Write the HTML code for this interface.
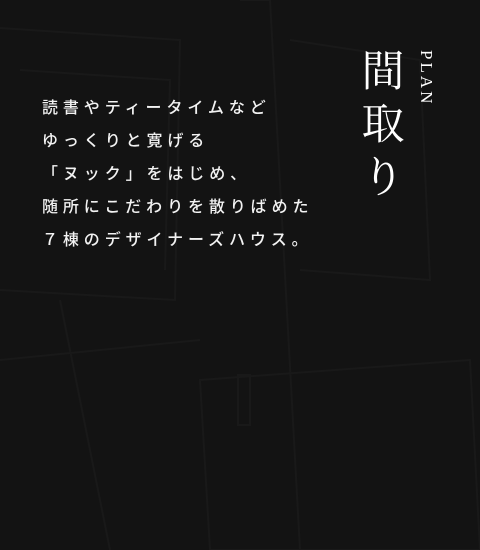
<!DOCTYPE html>
<html><head><meta charset="utf-8"><style>
body{margin:0;width:480px;height:550px;background:#131313;overflow:hidden;position:relative;font-family:"Liberation Sans","Noto Sans CJK JP",sans-serif}
.bg{position:absolute;left:0;top:0}
.t{position:absolute;left:42px;top:92px;color:#f2f2f2;font-size:16px;font-weight:500;letter-spacing:4.9px;line-height:33px;white-space:nowrap}
.h{position:absolute;left:358px;top:42px;color:#fff;font-family:"Noto Serif CJK SC","Noto Sans CJK JP",serif;font-size:43px;line-height:53px;width:50px;text-align:center}
.p{position:absolute;left:416px;top:50px;color:#fff;font-family:"Liberation Serif",serif;font-size:17px;letter-spacing:3px;transform-origin:0 0;transform:rotate(90deg) translate(0,-20px);white-space:nowrap}
</style></head><body>
<svg class="bg" width="480" height="550" fill="none" stroke="#191919" stroke-width="2">
<path d="M0 28 L180 40 L175 300 L0 290"/>
<path d="M20 70 L170 80 L165 270"/>
<path d="M240 0 L270 0 L300 550"/>
<path d="M290 40 L420 60 L430 280 L300 270"/>
<path d="M200 380 L470 360 L480 550 L210 550 Z"/>
<path d="M60 300 L110 550"/>
<path d="M0 360 L200 340"/>
<rect x="238" y="375" width="12" height="50"/>
</svg>
<div class="t">読書やティータイムなど<br>ゆっくりと寛げる<br>「ヌック」をはじめ、<br>随所にこだわりを散りばめた<br>７棟のデザイナーズハウス。</div>
<div class="h">間<br>取<br>り</div>
<div class="p">PLAN</div>
</body></html>
